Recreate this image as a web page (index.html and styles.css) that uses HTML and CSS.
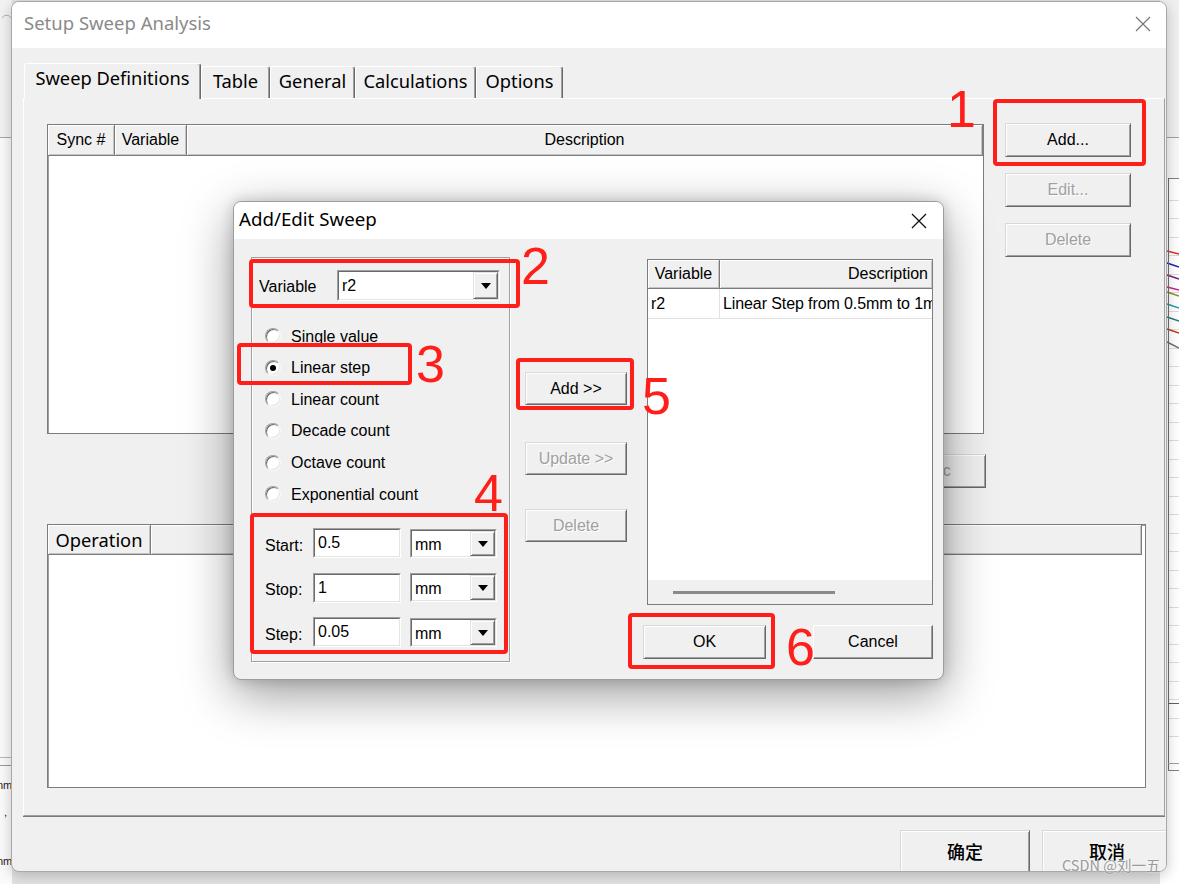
FILE: index.html
```html
<!DOCTYPE html>
<html>
<head>
<meta charset="utf-8">
<title>Setup Sweep Analysis</title>
<link rel="stylesheet" href="styles.css">
</head>
<body>
<div class="screen">

  <div class="app app-left">
    <svg class="app-svg" width="12" height="884" viewBox="0 0 12 884">
      <rect x="0" y="0" width="12" height="137" fill="#f3f3f3"/>
      <path d="M2 18 a5 5 0 0 1 9 0" fill="none" stroke="#b0b0b0" stroke-width="1"/>
      <line x1="0" y1="137.5" x2="12" y2="137.5" stroke="#a8a8a8"/>
      <line x1="0" y1="757.5" x2="12" y2="757.5" stroke="#b8b8b8"/>
      <line x1="0" y1="765.5" x2="12" y2="765.5" stroke="#9a9a9a"/>
    </svg>
    <span class="al-rot">dB(S(1,1))</span>
    <span class="al-t al-t1">nm</span>
    <span class="al-t al-t2">,</span>
    <span class="al-t al-t3">nm</span>
  </div>

  <div class="app app-right">
    <svg class="app-svg" width="19" height="884" viewBox="0 0 19 884">
      <rect x="0" y="0" width="19" height="137" fill="#f0f0f0"/>
      <line x1="0" y1="137.5" x2="19" y2="137.5" stroke="#a0a0a0"/>
      <rect x="0" y="138" width="19" height="40" fill="#f8f8f8"/>
      <line x1="8" y1="178.5" x2="19" y2="178.5" stroke="#808080"/>
      <g stroke="#dcdcdc" stroke-width="1">
        <line x1="8" y1="200.5" x2="19" y2="200.5"/>
        <line x1="8" y1="218.5" x2="19" y2="218.5"/>
        <line x1="8" y1="237.5" x2="19" y2="237.5"/>
        <line x1="8" y1="255.5" x2="19" y2="255.5"/>
        <line x1="8" y1="274.5" x2="19" y2="274.5"/>
        <line x1="8" y1="292.5" x2="19" y2="292.5"/>
        <line x1="8" y1="311.5" x2="19" y2="311.5"/>
        <line x1="8" y1="329.5" x2="19" y2="329.5"/>
        <line x1="8" y1="348.5" x2="19" y2="348.5"/>
        <line x1="8" y1="366.5" x2="19" y2="366.5"/>
        <line x1="8" y1="385.5" x2="19" y2="385.5"/>
        <line x1="8" y1="403.5" x2="19" y2="403.5"/>
        <line x1="8" y1="422.5" x2="19" y2="422.5"/>
        <line x1="8" y1="440.5" x2="19" y2="440.5"/>
        <line x1="8" y1="459.5" x2="19" y2="459.5"/>
        <line x1="8" y1="477.5" x2="19" y2="477.5"/>
        <line x1="8" y1="496.5" x2="19" y2="496.5"/>
        <line x1="8" y1="514.5" x2="19" y2="514.5"/>
        <line x1="8" y1="533.5" x2="19" y2="533.5"/>
        <line x1="8" y1="551.5" x2="19" y2="551.5"/>
        <line x1="8" y1="570.5" x2="19" y2="570.5"/>
        <line x1="8" y1="588.5" x2="19" y2="588.5"/>
        <line x1="8" y1="607.5" x2="19" y2="607.5"/>
        <line x1="8" y1="625.5" x2="19" y2="625.5"/>
        <line x1="8" y1="644.5" x2="19" y2="644.5"/>
        <line x1="8" y1="662.5" x2="19" y2="662.5"/>
        <line x1="8" y1="681.5" x2="19" y2="681.5"/>
        <line x1="8" y1="699.5" x2="19" y2="699.5"/>
        <line x1="8" y1="718.5" x2="19" y2="718.5"/>
        <line x1="8" y1="736.5" x2="19" y2="736.5"/>
      </g>
      <g stroke-width="1.4" fill="none">
        <line x1="7" y1="251" x2="19" y2="254" stroke="#e03030"/>
        <line x1="7" y1="263" x2="19" y2="267" stroke="#2020c0"/>
        <line x1="7" y1="275" x2="19" y2="279" stroke="#702080"/>
        <line x1="7" y1="287" x2="19" y2="290" stroke="#d02090"/>
        <line x1="7" y1="292" x2="19" y2="296" stroke="#909020"/>
        <line x1="7" y1="304" x2="19" y2="308" stroke="#20a0b0"/>
        <line x1="7" y1="317" x2="19" y2="321" stroke="#208080"/>
        <line x1="7" y1="329" x2="19" y2="333" stroke="#c04010"/>
        <line x1="7" y1="342" x2="19" y2="348" stroke="#707070"/>
      </g>
      <line x1="8.5" y1="178" x2="8.5" y2="770" stroke="#707070"/>
      <line x1="8" y1="703.5" x2="19" y2="703.5" stroke="#606060"/>
      <line x1="8" y1="763.5" x2="19" y2="763.5" stroke="#a0a0a0"/>
      <line x1="8" y1="770.5" x2="19" y2="770.5" stroke="#808080"/>
    </svg>
  </div>

  <section class="win main">
    <header class="titlebar main-title">
      <span class="title">Setup Sweep Analysis</span>
      <svg class="xicon" width="16" height="16" viewBox="0 0 16 16"><path d="M1 1L15 15M15 1L1 15" stroke="#7a7a7a" stroke-width="1.3" fill="none"/></svg>
    </header>
    <div class="main-body">
      <nav class="tabs">
        <span class="tab sel t1">Sweep Definitions</span>
        <span class="tab t2">Table</span>
        <span class="tab t3">General</span>
        <span class="tab t4">Calculations</span>
        <span class="tab t5">Options</span>
      </nav>
      <div class="panel">
        <div class="row-top">
          <div class="list list-sweeps">
            <div class="lh">
              <span class="hc c-sync">Sync #</span>
              <span class="hc c-var">Variable</span>
              <span class="hc c-grow">Description</span>
            </div>
          </div>
          <div class="side">
            <div class="btn side-btn">Add...</div>
            <div class="btn side-btn dis">Edit...</div>
            <div class="btn side-btn dis">Delete</div>
          </div>
        </div>
        <div class="row-mid">
          <div class="btn mid-hidden">Sync</div>
        </div>
        <div class="list list-ops">
          <div class="lh lh-ops">
            <span class="hc c-op">Operation</span>
            <span class="hc c-grow"></span>
          </div>
        </div>
      </div>
      <footer class="foot">
        <div class="btn fbtn">确定</div>
        <div class="btn fbtn">取消</div>
      </footer>
    </div>
  </section>

  <section class="win dlg">
    <header class="titlebar dlg-title">
      <span class="title">Add/Edit Sweep</span>
      <svg class="xicon" width="16" height="16" viewBox="0 0 16 16"><path d="M1 1L15 15M15 1L1 15" stroke="#111" stroke-width="1.3" fill="none"/></svg>
    </header>
    <div class="dlg-body">
      <div class="group">
        <div class="var-row">
          <span class="var-label">Variable</span>
          <div class="combo combo-var">
            <div class="combo-in"><span class="ctext">r2</span><span class="drop"><i class="tri"></i></span></div>
          </div>
        </div>
        <div class="radios">
          <div class="radio"><span class="rb"></span><span>Single value</span></div>
          <div class="radio"><span class="rb on"></span><span>Linear step</span></div>
          <div class="radio"><span class="rb"></span><span>Linear count</span></div>
          <div class="radio"><span class="rb"></span><span>Decade count</span></div>
          <div class="radio"><span class="rb"></span><span>Octave count</span></div>
          <div class="radio"><span class="rb"></span><span>Exponential count</span></div>
        </div>
        <div class="ranges">
          <div class="range">
            <span class="rlabel">Start:</span>
            <div class="field"><div class="field-in">0.5</div></div>
            <div class="combo combo-unit"><div class="combo-in"><span class="ctext">mm</span><span class="drop"><i class="tri"></i></span></div></div>
          </div>
          <div class="range">
            <span class="rlabel">Stop:</span>
            <div class="field"><div class="field-in">1</div></div>
            <div class="combo combo-unit"><div class="combo-in"><span class="ctext">mm</span><span class="drop"><i class="tri"></i></span></div></div>
          </div>
          <div class="range">
            <span class="rlabel">Step:</span>
            <div class="field"><div class="field-in">0.05</div></div>
            <div class="combo combo-unit"><div class="combo-in"><span class="ctext">mm</span><span class="drop"><i class="tri"></i></span></div></div>
          </div>
        </div>
      </div>

      <div class="mid">
        <div class="btn mbtn m-add">Add &gt;&gt;</div>
        <div class="btn mbtn m-upd dis">Update &gt;&gt;</div>
        <div class="btn mbtn m-del dis">Delete</div>
      </div>

      <div class="rcol">
        <div class="dlist">
          <div class="lh dlh">
            <span class="hc d-var">Variable</span>
            <span class="hc d-desc">Description</span>
          </div>
          <div class="drow">
            <span class="dc d-var-c">r2</span>
            <span class="dc d-desc-c">Linear Step from 0.5mm to 1mm by 0.05mm</span>
          </div>
          <div class="dfill"></div>
          <div class="hscroll"><span class="thumb"></span></div>
        </div>
        <div class="okrow">
          <div class="btn okbtn">OK</div>
          <div class="btn cbtn">Cancel</div>
        </div>
      </div>
    </div>
  </section>

  <div class="mark box1"></div>
  <div class="mark box2"></div>
  <div class="mark box3"></div>
  <div class="mark box4"></div>
  <div class="mark box5"></div>
  <div class="mark box6"></div>
  <span class="num n1">1</span>
  <span class="num n2">2</span>
  <span class="num n3">3</span>
  <span class="num n4">4</span>
  <span class="num n5">5</span>
  <span class="num n6">6</span>

  <span class="wm">CSDN @刘一五</span>
</div>
</body>
</html>
```

FILE: styles.css
```css
* { box-sizing: border-box; margin: 0; padding: 0; }

body {
  margin: 0;
  background: #e4e4e4;
  font-family: "Liberation Sans", Arial, sans-serif;
  font-size: 16px;
  color: #000;
}

.screen {
  position: relative;
  width: 1179px;
  height: 884px;
  overflow: hidden;
  background: #e2e2e2;
}

/* background applications */
.app {
  position: absolute;
  top: 0;
  height: 884px;
  background: #fbfbfb;
}
.app-left { left: 0; width: 12px; }
.app-right { left: 1160px; width: 19px; background: #ffffff; }
.app-svg { display: block; }
.al-rot {
  position: absolute;
  left: -32px;
  top: 440px;
  font-size: 11px;
  color: #333;
  transform: rotate(-90deg);
  white-space: nowrap;
}
.al-t { position: absolute; left: -3px; font-size: 11px; color: #222; }
.al-t1 { top: 779px; }
.al-t2 { top: 806px; left: 4px; }
.al-t3 { top: 855px; }

/* windows */
.win {
  position: absolute;
  background: #f0f0f0;
  overflow: hidden;
  display: flex;
  flex-direction: column;
}

.titlebar {
  background: #ffffff;
  display: flex;
  align-items: center;
  justify-content: space-between;
  flex: none;
}
.xicon { display: block; }

.main {
  left: 11px;
  top: 1px;
  width: 1156px;
  height: 871px;
  border: 1px solid #a8a8a8;
  border-radius: 8px;
  box-shadow: 0 3px 14px rgba(0, 0, 0, 0.22);
}
.main-title {
  height: 46px;
  padding: 0 15px 0 12px;
}
.main-title .title {
  font-family: "Noto Sans", "Open Sans", sans-serif;
  font-size: 18.5px;
  line-height: 24px;
  color: #8a8a8a;
  margin-top: -5px;
}
.main-title .xicon { margin-top: -2px; }

.main-body {
  flex: 1;
  display: flex;
  flex-direction: column;
  padding-left: 11px;
}

/* tabs */
.tabs {
  display: flex;
  align-items: flex-end;
  height: 35px;
  margin: 15px 0 0 1px;
  position: relative;
  z-index: 1;
}
.tab {
  height: 32px;
  display: flex;
  align-items: center;
  justify-content: center;
  font-family: "Noto Sans", "Open Sans", sans-serif;
  font-size: 18.3px;
  line-height: 24px;
  color: #000;
  background: #f0f0f0;
  border-top: 1px solid #ffffff;
  border-left: 1px solid #ffffff;
  border-right: 1px solid #696969;
  box-shadow: inset -1px 0 #a0a0a0;
  border-radius: 3px 3px 0 0;
  padding-bottom: 4px;
}
.tab.sel {
  height: 36px;
  margin-bottom: -1px;
  padding-bottom: 8px;
}
.t1 { width: 177px; }
.t2 { width: 69px; }
.t3 { width: 85px; }
.t4 { width: 121px; }
.t5 { width: 87px; }

.panel {
  height: 718px;
  margin-right: 1px;
  border: 1px solid;
  border-color: #ffffff #a0a0a0 #a0a0a0 #ffffff;
  box-shadow: 0 1px #7a7a7a;
  padding: 25px 0 0 23px;
  display: flex;
  flex-direction: column;
}

.row-top {
  display: flex;
  align-items: flex-start;
}

/* list views */
.list {
  background: #ffffff;
  border: 1px solid #7c7c7c;
  box-shadow: inset 1px 1px #a0a0a0;
  flex: none;
}
.list-sweeps { width: 937px; height: 310px; }
.list-ops { width: 1099px; height: 264px; margin-top: 36px; }

.lh {
  display: flex;
  height: 31px;
  background: #f0f0f0;
}
.hc {
  display: flex;
  align-items: center;
  justify-content: center;
  height: 100%;
  background: #f0f0f0;
  border-right: 1px solid #7c7c7c;
  border-bottom: 1px solid #7c7c7c;
  box-shadow: inset 1px 1px #ffffff, inset -1px -1px #c4c4c4;
  font-size: 16px;
  white-space: nowrap;
  overflow: hidden;
}
.c-sync { width: 67px; }
.c-var { width: 72px; }
.c-grow { flex: 1; }
.lh-ops { height: 30px; margin-right: 3px; }
.c-op {
  width: 103px;
  font-family: "Noto Sans", "Open Sans", sans-serif;
  font-size: 18.3px;
  padding-bottom: 1px;
}

/* buttons */
.btn {
  display: flex;
  align-items: center;
  justify-content: center;
  background: #f0f0f0;
  border: 1px solid;
  border-color: #d8d8d8 #696969 #696969 #d8d8d8;
  box-shadow: inset 1px 1px #ffffff, inset -1px -1px #a0a0a0;
  font-family: "Liberation Sans", Arial, sans-serif;
  font-size: 16px;
  color: #000;
  white-space: nowrap;
  flex: none;
}
.btn.dis {
  color: #a0a0a0;
  text-shadow: 1px 1px #ffffff;
}

.side {
  margin: -1px 0 0 21px;
  display: flex;
  flex-direction: column;
  gap: 16px;
}
.side-btn { width: 126px; height: 34px; }

.row-mid {
  width: 939px;
  margin-top: 20px;
  display: flex;
  justify-content: flex-end;
}
.mid-hidden { width: 106px; height: 34px; color: #a0a0a0; }

.foot {
  display: flex;
  justify-content: flex-end;
  gap: 12px;
  padding-top: 14px;
  margin-right: -6px;
}
.fbtn {
  width: 130px;
  height: 48px;
  padding-bottom: 7px;
  font-family: "Noto Sans CJK SC", "Noto Sans", sans-serif;
  font-size: 18px;
  font-weight: 500;
}

/* dialog */
.dlg {
  left: 233px;
  top: 201px;
  width: 711px;
  height: 479px;
  border: 1px solid #9c9c9c;
  border-radius: 8px;
  z-index: 5;
  box-shadow: 0 14px 50px rgba(0, 0, 0, 0.40), 0 0 14px rgba(0, 0, 0, 0.18);
}
.dlg-title {
  height: 37px;
  padding: 0 16px 0 5px;
}
.dlg-title .title {
  font-family: "Noto Sans", "Open Sans", sans-serif;
  font-size: 18.7px;
  line-height: 24px;
  color: #000;
  margin-top: -3px;
}

.dlg-body {
  flex: 1;
  display: flex;
  align-items: flex-start;
  padding: 18px 0 0 17px;
}

.group {
  width: 259px;
  height: 405px;
  border: 1px solid #a0a0a0;
  box-shadow: inset 1px 1px #ffffff, 1px 1px #ffffff;
  padding-left: 7px;
  display: flex;
  flex-direction: column;
}

.var-row {
  display: flex;
  align-items: center;
  height: 31px;
  margin-top: 12px;
}
.var-label { width: 78px; padding-top: 2px; }

.combo {
  border: 1px solid;
  border-color: #a0a0a0 #ffffff #ffffff #a0a0a0;
  display: flex;
}
.combo-in {
  flex: 1;
  display: flex;
  background: #ffffff;
  border: 1px solid;
  border-color: #696969 #e3e3e3 #e3e3e3 #696969;
}
.ctext {
  flex: 1;
  display: flex;
  align-items: center;
  padding-left: 3px;
}
.combo-unit .ctext { padding-top: 3px; }
.drop {
  width: 25px;
  display: flex;
  align-items: center;
  justify-content: center;
  background: #f0f0f0;
  border: 1px solid;
  border-color: #e3e3e3 #696969 #696969 #e3e3e3;
  box-shadow: inset 1px 1px #ffffff, inset -1px -1px #a0a0a0;
}
.tri {
  display: block;
  width: 0;
  height: 0;
  border-left: 5px solid transparent;
  border-right: 5px solid transparent;
  border-top: 6px solid #000;
  margin-top: 1px;
}
.combo-var { width: 163px; height: 31px; }
.combo-unit { width: 87px; height: 29px; margin-left: 9px; }

.radios {
  margin-top: 19.4px;
  display: flex;
  flex-direction: column;
}
.radio {
  height: 31.6px;
  display: flex;
  align-items: center;
  gap: 10px;
  padding-left: 6px;
}
.radio span + span { padding-top: 1px; }
.rb {
  position: relative;
  width: 16px;
  height: 16px;
  border-radius: 50%;
  background: #ffffff;
  border: 1px solid;
  border-color: #a0a0a0 #f8f8f8 #f8f8f8 #a0a0a0;
  box-shadow: inset 1px 1px #6a6a6a, inset -1px -1px #e3e3e3;
  flex: none;
}
.rb.on::after {
  content: "";
  position: absolute;
  left: 4px;
  top: 4px;
  width: 6px;
  height: 6px;
  border-radius: 50%;
  background: #000;
}

.ranges {
  margin-top: 11px;
  display: flex;
  flex-direction: column;
}
.range {
  height: 44.5px;
  display: flex;
  align-items: center;
  padding-left: 6px;
}
.rlabel { width: 48px; padding-top: 5px; }
.field {
  width: 88px;
  height: 30px;
  border: 1px solid;
  border-color: #a0a0a0 #ffffff #ffffff #a0a0a0;
  display: flex;
}
.field-in {
  flex: 1;
  background: #ffffff;
  border: 1px solid;
  border-color: #696969 #e3e3e3 #e3e3e3 #696969;
  padding: 4px 0 0 3px;
}

.mid {
  width: 102px;
  margin-left: 15px;
  display: flex;
  flex-direction: column;
}
.mbtn { width: 102px; height: 33px; }
.m-add { margin-top: 115px; }
.m-upd { margin-top: 37px; }
.m-del { margin-top: 34px; }

.rcol {
  margin: 2px 0 0 20px;
  display: flex;
  flex-direction: column;
}
.dlist {
  width: 286px;
  height: 346px;
  background: #ffffff;
  border: 1px solid #7c7c7c;
  display: flex;
  flex-direction: column;
  overflow: hidden;
}
.dlh { height: 29px; flex: none; }
.d-var { width: 72px; flex: none; }
.d-desc { flex: 1; justify-content: flex-end; padding-right: 4px; border-right: none; }
.drow {
  display: flex;
  height: 30px;
  border-bottom: 1px solid #e2e2e2;
  flex: none;
}
.dc {
  display: flex;
  align-items: center;
  white-space: nowrap;
  overflow: hidden;
  padding-left: 3px;
}
.d-var-c { width: 72px; border-right: 1px solid #e2e2e2; flex: none; }
.d-desc-c { flex: 1; letter-spacing: -0.1px; }
.dfill { flex: 1; }
.hscroll {
  height: 24px;
  flex: none;
  background: #f0f0f0;
  padding: 11px 0 0 25px;
}
.thumb {
  display: block;
  width: 162px;
  height: 3px;
  background: #8a8a8a;
}

.okrow {
  width: 290px;
  margin: 20px 0 0 -4px;
  display: flex;
  justify-content: space-between;
}
.okbtn { width: 123px; height: 34px; }
.cbtn { width: 120px; height: 34px; border-color: #ffffff #696969 #696969 #ffffff; box-shadow: inset -1px -1px #a0a0a0; }

/* annotations */
.mark {
  position: absolute;
  border: 4px solid #fe1f1a;
  border-radius: 4px;
  z-index: 10;
}
.box1 { left: 993px; top: 99px; width: 153px; height: 67px; }
.box2 { left: 249px; top: 259px; width: 271px; height: 49px; }
.box3 { left: 237px; top: 343px; width: 175px; height: 42px; }
.box4 { left: 250px; top: 513px; width: 258px; height: 141px; }
.box5 { left: 516px; top: 358px; width: 118px; height: 52px; }
.box6 { left: 628px; top: 613px; width: 147px; height: 56px; }

.num {
  position: absolute;
  font-family: "Liberation Sans", Arial, sans-serif;
  font-size: 52px;
  line-height: 52px;
  color: #fe1f1a;
  z-index: 10;
}
.n1 { left: 947px; top: 83px; }
.n2 { left: 521px; top: 240px; }
.n3 { left: 416px; top: 338px; }
.n4 { left: 474px; top: 467px; }
.n5 { left: 642px; top: 370px; }
.n6 { left: 786px; top: 621px; }

.wm {
  position: absolute;
  left: 1062px;
  top: 856px;
  font-family: "Noto Sans CJK SC", "Liberation Sans", sans-serif;
  font-size: 14.5px;
  line-height: 18px;
  color: #9a9a9a;
  text-shadow: 0 0 2px #ffffff;
  z-index: 10;
}
```
